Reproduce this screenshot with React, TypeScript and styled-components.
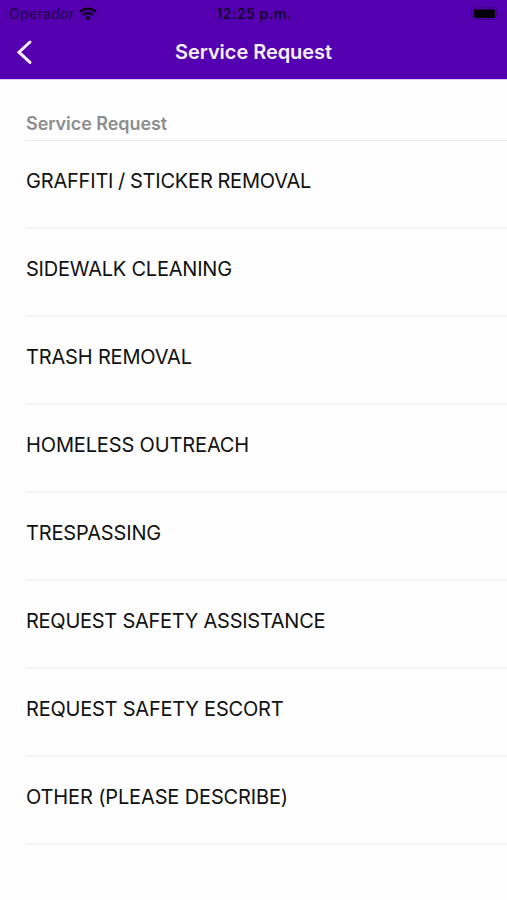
import React from "react";
import styled, { createGlobalStyle } from "styled-components";

const GlobalStyle = createGlobalStyle`
  * { box-sizing: border-box; }
  body { margin: 0; background: #fefefe; font-family: Inter, sans-serif; }
`;

const Screen = styled.main`
  width: 100%;
  min-height: 900px;
  background: #fefefe;
`;

const Header = styled.header`
  height: 80px;
  border-bottom: 1px solid #dcc9ef;
  background: #5500b0;
  background-clip: padding-box;
`;

const StatusBar = styled.div`
  display: grid;
  grid-template-columns: 1fr auto 1fr;
  align-items: center;
  height: 27px;
  padding: 0 8px 0 9px;
  color: #1b0045;
  font-size: 14px;
  line-height: 27px;
`;

const Carrier = styled.div`
  display: flex;
  align-items: center;
  gap: 5px;
  letter-spacing: 0.32px;
`;

const Clock = styled.div`
  color: #14002f;
  font-weight: 600;
  letter-spacing: 0.5px;
`;

const Battery = styled.svg`
  justify-self: end;
`;

const NavBar = styled.div`
  display: grid;
  grid-template-columns: 48px 1fr 48px;
  align-items: center;
  height: 50px;
`;

const BackButton = styled.button`
  display: flex;
  padding: 0 0 0 16px;
  border: 0;
  background: none;
`;

const Title = styled.h1`
  margin: 0;
  color: #f6effc;
  font-size: 20px;
  font-weight: 600;
  letter-spacing: -0.05px;
  line-height: 50px;
  text-align: center;
`;

const List = styled.section`
  padding: 33px 0 0 25px;
`;

const SectionTitle = styled.h2`
  height: 28px;
  margin: 0;
  padding-left: 1px;
  border-bottom: 1px solid #ebebeb;
  color: #8d8d8d;
  font-size: 18px;
  font-weight: 600;
  letter-spacing: -0.06px;
  line-height: 21px;
`;

const Row = styled.div<{ $tracking: number; $wordGap?: number }>`
  height: 88px;
  padding: 27px 0 0 1px;
  border-bottom: 2px solid #f4f4f4;
  color: #111;
  font-size: 20px;
  letter-spacing: ${(p) => p.$tracking}px;
  word-spacing: ${(p) => p.$wordGap ?? 0}px;
  line-height: 26px;
  white-space: nowrap;
`;

const services = [
  { name: "GRAFFITI / STICKER REMOVAL", tracking: -0.2, wordGap: -0.6 },
  { name: "SIDEWALK CLEANING", tracking: -0.22 },
  { name: "TRASH REMOVAL", tracking: -0.17 },
  { name: "HOMELESS OUTREACH", tracking: -0.14 },
  { name: "TRESPASSING", tracking: -0.15 },
  { name: "REQUEST SAFETY ASSISTANCE", tracking: -0.26 },
  { name: "REQUEST SAFETY ESCORT", tracking: -0.22 },
  { name: "OTHER (PLEASE DESCRIBE)", tracking: -0.14 },
];

export default function App() {
  return (
    <Screen>
      <GlobalStyle />
      <Header>
        <StatusBar>
          <Carrier>
            Operador
            <svg width="18" height="14" viewBox="0 0 18 14" fill="none" stroke="#0d001c" strokeWidth="2.4">
              <path d="M1 5a11.4 11.4 0 0 1 16 0M3.9 8.2a7.2 7.2 0 0 1 10.2 0" />
              <path d="M6.2 10.8a4 4 0 0 1 5.6 0L9 13.7z" fill="#0d001c" stroke="none" />
            </svg>
          </Carrier>
          <Clock>12:25 p.m.</Clock>
          <Battery width="28" height="14" viewBox="0 0 28 14">
            <rect x="0.5" y="0.5" width="25" height="12" rx="3" fill="none" stroke="#43008e" />
            <rect x="2.5" y="2.2" width="21.5" height="8.8" rx="1.6" fill="#050009" />
            <path d="M26.5 5v4q1.5-.5 1.5-2t-1.5-2" fill="#43008e" />
          </Battery>
        </StatusBar>
        <NavBar>
          <BackButton aria-label="Back">
            <svg width="17" height="26" viewBox="0 0 17 26" fill="none" stroke="#f6effc" strokeWidth="3" strokeLinecap="round">
              <path d="M14 3 3 13.2 14 23.4" />
            </svg>
          </BackButton>
          <Title>Service Request</Title>
        </NavBar>
      </Header>
      <List>
        <SectionTitle>Service Request</SectionTitle>
        {services.map((s) => (
          <Row key={s.name} $tracking={s.tracking} $wordGap={s.wordGap}>
            {s.name}
          </Row>
        ))}
      </List>
    </Screen>
  );
}
